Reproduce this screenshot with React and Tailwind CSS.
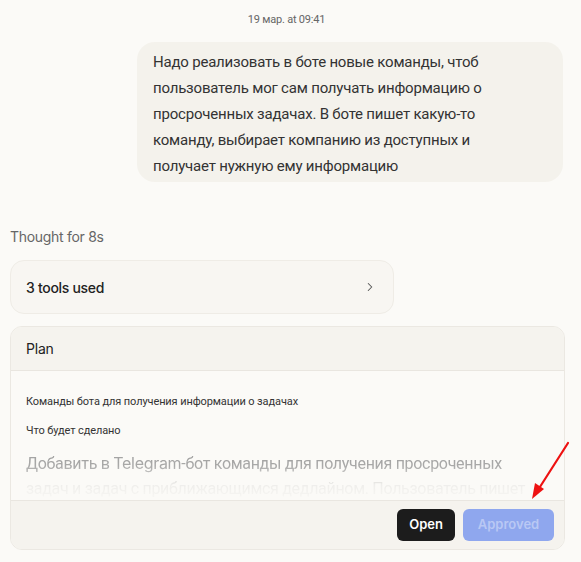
import { ChevronRight } from 'lucide-react';

// Строки сообщения пользователя (переносы как на скриншоте)
const lines = [
  'Надо реализовать в боте новые команды, чтоб',
  'пользователь мог сам получать информацию о',
  'просроченных задачах. В боте пишет какую-то',
  'команду, выбирает компанию из доступных и',
  'получает нужную ему информацию',
];

export default function App() {
  return (
    <div className="relative min-h-[562px] w-full bg-[#fbfaf7] text-[#2b2b2b] font-['Roboto',sans-serif]">
      {/* Время сообщения */}
      <div className="pt-[13px] text-center text-[11px] text-[#666] leading-[14px] pr-[8px] tracking-[-0.2px]">
        19 мар. at 09:41
      </div>

      {/* Сообщение пользователя */}
      <div className="flex justify-end pr-[18px] mt-[15px]">
        <div className="w-[426px] rounded-[18px] bg-[#f4f2ec] px-[16px] pt-[7px] pb-[3px] text-[15px] leading-[26px] text-[#333] tracking-[-0.2px]">
          {lines.map((l) => (
            <div key={l} className="whitespace-nowrap">{l}</div>
          ))}
        </div>
      </div>

      <div className="px-[10px] pr-[16px]">
        <div className="mt-[45px] font-['Inter',sans-serif] text-[14px] leading-[20px] text-[#666] tracking-[-0.3px]">
          Thought for 8s
        </div>

        {/* Инструменты */}
        <div className="mt-[13px] flex h-[54px] w-[384px] items-center justify-between rounded-[14px] border border-[#efece6] bg-[#f8f6f2] pl-[15px] pr-[16px]">
          <span className="font-['Inter',sans-serif] text-[14px] font-medium text-[#222] tracking-[-0.3px]">3 tools used</span>
          <ChevronRight className="h-[14px] w-[14px] text-[#555]" strokeWidth={1.8} />
        </div>

        {/* План */}
        <div className="mt-[12px] overflow-hidden rounded-[12px] border border-[#ebe8e2] bg-[#fbfaf7]">
          <div className="flex h-[44px] items-center border-b border-[#e9e6e0] bg-[#f5f3ee] px-[15px]">
            <span className="font-['Inter',sans-serif] text-[14px] text-[#222] tracking-[-0.2px]">Plan</span>
          </div>
          <div className="h-[129px] overflow-hidden px-[15px] pt-[24px]">
            <div className="text-[11px] leading-[14px] text-[#333] tracking-[-0.1px]">
              Команды бота для получения информации о задачах
            </div>
            <div className="mt-[15px] text-[11px] leading-[14px] text-[#333] tracking-[-0.1px]">
              Что будет сделано
            </div>
            <div className="mt-[13px] text-[16px] leading-[25px] text-[#9a9a9a] tracking-[-0.3px] [mask-image:linear-gradient(to_bottom,rgba(0,0,0,0.95)_0%,rgba(0,0,0,0.85)_20%,rgba(0,0,0,0.12)_45%,rgba(0,0,0,0)_70%)]">
              <div className="whitespace-nowrap">
                Добавить в <span className="font-['Inter',sans-serif]">Telegram</span>-бот команды для получения просроченных
              </div>
              <div className="whitespace-nowrap">задач и задач с приближающимся дедлайном. Пользователь пишет</div>
              <div className="whitespace-nowrap">команду и выбирает компанию из доступных.</div>
            </div>
          </div>
          <div className="flex h-[49px] items-center justify-end gap-[8px] border-t border-[#e9e6e0] bg-[#f5f3ee] px-[10px]">
            <button className="h-[32px] rounded-[6px] bg-[#1c1c1c] px-[12px] font-['Inter',sans-serif] text-[13px] font-semibold text-white">
              Open
            </button>
            <button className="h-[32px] w-[91px] rounded-[6px] bg-[#8fa7ee] font-['Inter',sans-serif] text-[13px] font-semibold text-[#b9c8f4]">
              Approved
            </button>
          </div>
        </div>
      </div>

      {/* Красная стрелка-аннотация */}
      <svg className="absolute left-[525px] top-[438px] h-[66px] w-[50px]" viewBox="0 0 50 66" fill="none">
        <line x1="43" y1="5" x2="13" y2="52" stroke="#ee1111" strokeWidth="2.2" strokeLinecap="round" />
        <polygon points="7,61 10,45 19,51" fill="#ee1111" />
      </svg>
    </div>
  );
}
